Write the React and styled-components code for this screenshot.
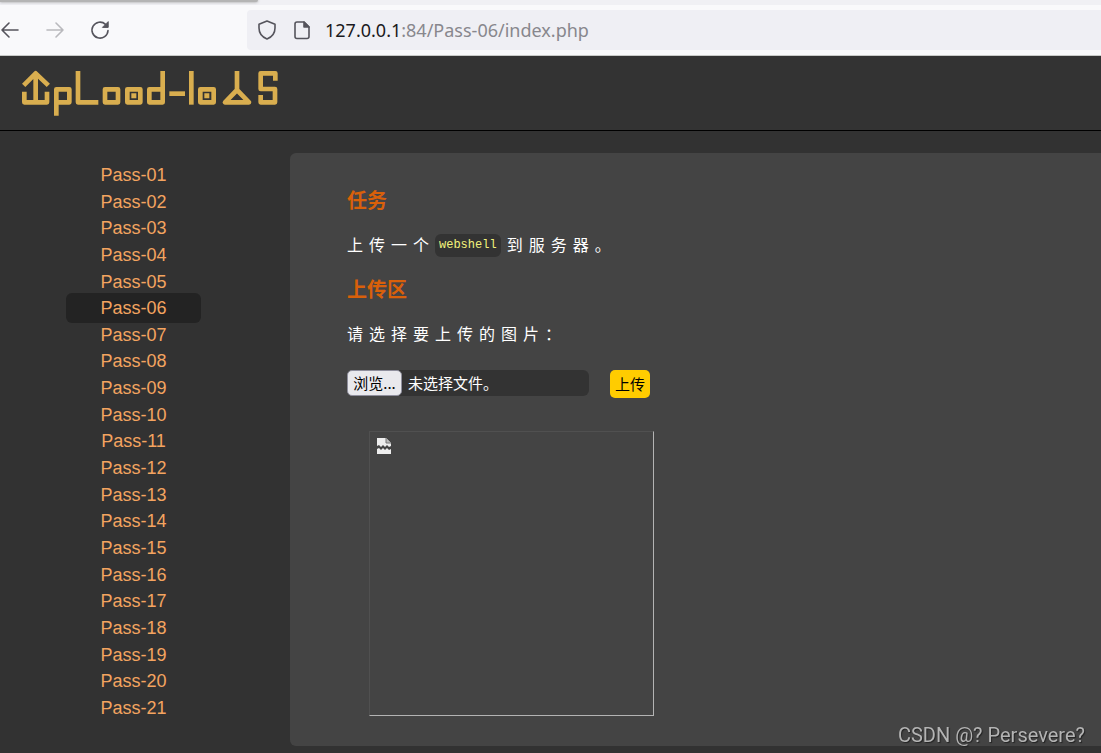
import React, { useState } from "react";
import styled, { createGlobalStyle } from "styled-components";

const Global = createGlobalStyle`
  * { box-sizing: border-box; }
  body {
    margin: 0;
    background: #323232;
    font-family: "Liberation Sans", "Noto Sans CJK SC", sans-serif;
    overflow-x: hidden;
  }
`;

const TabStrip = styled.div`
  height: 5px;
  background: #f0f0f4;
  overflow: hidden;
`;

const TabEdge = styled.div`
  width: 258px;
  height: 2px;
  border-radius: 0 0 6px 0;
  background: #b4b4b4;
  box-shadow: 0 0 3px #8a8a8a;
`;

const Toolbar = styled.nav`
  display: flex;
  align-items: center;
  height: 51px;
  background: #f9f9fb;
  border-bottom: 1px solid #c8cac8;
`;

const NavButtons = styled.div`
  display: flex;
  flex: none;
  gap: 25px;
  width: 247px;
`;

const NavButton = styled.button`
  display: flex;
  width: 20px;
  height: 20px;
  padding: 0;
  border: 0;
  background: none;
  color: ${(p) => (p.disabled ? "#b9b9bd" : "#55545c")};
`;

const AddressBar = styled.div`
  display: flex;
  flex: 1;
  align-items: center;
  gap: 15px;
  height: 40px;
  padding-left: 10px;
  border-radius: 4px 0 0 4px;
  background: #efeff4;
  color: #55545c;
`;

const Address = styled.p`
  margin: 0 0 0 -2px;
  font: 18px/24px "Noto Sans", sans-serif;
  color: #88878d;
`;

const Host = styled.span`
  color: #1a1920;
`;

const Header = styled.header`
  display: flex;
  align-items: flex-start;
  height: 75px;
  padding: 13px 20px;
  background: #333;
  border-bottom: 1px solid #000;
`;

const Main = styled.main`
  display: flex;
  padding: 22px 0 7px;
`;

const Sidebar = styled.ul`
  display: flex;
  flex: none;
  flex-direction: column;
  justify-content: space-between;
  align-items: center;
  width: 267px;
  margin: 0 23px 0 0;
  padding: 9px 0 25px;
  list-style: none;
`;

const PassItem = styled.li`
  height: 26px;
  font-size: 18px;
  line-height: 26px;
`;

const PassLink = styled.a`
  padding: 5px 34px;
  border-radius: 6px;
  color: #f4a460;
  text-decoration: none;
  background: ${(p) => (p.$active ? "#232323" : "transparent")};
`;

const Panel = styled.section`
  flex: 1;
  padding: 32px 57px 30px;
  border-radius: 6px 0 0 6px;
  background: #444;
`;

const Title = styled.h3`
  margin: 0;
  font: bold 20px/30px "Noto Sans CJK SC", sans-serif;
  color: #d9600a;
`;

const Text = styled.p`
  margin: 16px 0 17px;
  font: 16px/26px "Noto Sans CJK SC", sans-serif;
  letter-spacing: 6px;
  color: #fff;
`;

const Code = styled.code`
  display: inline-block;
  vertical-align: bottom;
  margin-right: 6px;
  padding: 0 4px;
  border-radius: 6px;
  background: #333;
  color: #f2f27c;
  font: 12px/23px "Liberation Mono", monospace;
  letter-spacing: 0;
`;

const UploadForm = styled.form`
  display: flex;
  align-items: flex-start;
  gap: 21px;
  margin-top: 24px;
  font: 15px/26px "Noto Sans CJK SC", sans-serif;
`;

const FilePicker = styled.label`
  position: relative;
  display: flex;
  width: 242px;
  height: 26px;
  border-radius: 6px;
  background: #333;
  color: #fff;
`;

const HiddenFile = styled.input`
  position: absolute;
  inset: 0;
  width: 100%;
  opacity: 0;
`;

const Browse = styled.span`
  width: 55px;
  margin-right: 6px;
  border: 1px solid #8f8f9d;
  border-radius: 5px;
  background: #e9e9ed;
  color: #000;
  line-height: 24px;
  text-align: center;
`;

const Submit = styled.button`
  width: 40px;
  height: 28px;
  padding: 0;
  border: 0;
  border-radius: 5px;
  background: #fc0;
  color: #000;
  font: inherit;
`;

const Preview = styled.div`
  width: 285px;
  height: 285px;
  margin: 33px 0 0 22px;
  padding: 6px 7px;
  border: 1px solid;
  border-color: #505050 #b4b4b4 #b4b4b4 #505050;
`;

const Watermark = styled.div`
  position: fixed;
  right: 16px;
  bottom: 6px;
  font: 20px/24px Roboto, sans-serif;
  color: #b4b4b4;
  text-shadow: 1px 1px 1px #222;
`;

const Icon = ({ children, size = 20 }) => (
  <svg width={size} height={size} viewBox="0 0 20 20" fill="none" stroke="currentColor" strokeWidth="1.6" strokeLinecap="round" strokeLinejoin="round" aria-hidden="true">
    {children}
  </svg>
);

const Logo = () => (
  <svg width="260" height="50" viewBox="60 42 780 150" fill="none" stroke="#d9ae4f" strokeWidth="14" strokeLinejoin="round" role="img" aria-label="Upload-labs">
    <path d="M71 91 107 55 145 91M107 55V142M73 110V142H141V110" />
    <path d="M169 182V103H208V142H169" />
    <path d="M234 48V142H295" />
    <path d="M315 103H354V142H315Z" />
    <path d="M382 103H421V142H382Z" />
    <path d="M488 48V142H448V103H488" />
    <path d="M508 116H555" />
    <path d="M574 48V149" />
    <path d="M601 103H641V142H601Z" />
    <path d="M711 48V105L675 142H747L711 105" />
    <path d="M826 77V55H782V102H825V142H782V120" />
    <path d="M394 122H409M613 122H628" strokeWidth="15" />
  </svg>
);

const passes = Array.from({ length: 21 }, (_, i) => `Pass-${String(i + 1).padStart(2, "0")}`);

export default function App() {
  const [fileName, setFileName] = useState("");
  return (
    <>
      <Global />
      <TabStrip><TabEdge /></TabStrip>
      <Toolbar>
        <NavButtons>
          <NavButton aria-label="Back">
            <Icon><path d="M18 10H2M9 3 2 10l7 7" /></Icon>
          </NavButton>
          <NavButton aria-label="Forward" disabled>
            <Icon><path d="M2 10h16M11 3l7 7-7 7" /></Icon>
          </NavButton>
          <NavButton aria-label="Reload">
            <Icon>
              <path d="M18 10.5A8 8 0 1 1 15.5 4.3" />
              <path d="M18.2 2v5.4h-5.4z" fill="currentColor" strokeWidth="1" />
            </Icon>
          </NavButton>
        </NavButtons>
        <AddressBar>
          <Icon><path d="M10 1 18 4.3V8c0 5-3 9-8 11C5 17 2 13 2 8V4.3z" /></Icon>
          <Icon>
            <path d="M5 2h7l5 5v9.5a2 2 0 0 1-2 2H5a2 2 0 0 1-2-2V4a2 2 0 0 1 2-2z" />
            <path d="M12 2v5h5z" fill="currentColor" />
          </Icon>
          <Address><Host>127.0.0.1</Host>:84/Pass-06/index.php</Address>
        </AddressBar>
      </Toolbar>
      <Header><Logo /></Header>
      <Main>
        <Sidebar>
          {passes.map((name) => (
            <PassItem key={name}>
              <PassLink href={`#${name}`} $active={name === "Pass-06"}>{name}</PassLink>
            </PassItem>
          ))}
        </Sidebar>
        <Panel>
          <Title>任务</Title>
          <Text>上传一个<Code>webshell</Code>到服务器。</Text>
          <Title>上传区</Title>
          <Text>请选择要上传的图片：</Text>
          <UploadForm onSubmit={(e) => e.preventDefault()}>
            <FilePicker>
              <Browse>浏览...</Browse>
              {fileName || "未选择文件。"}
              <HiddenFile type="file" onChange={(e) => setFileName(e.target.files[0]?.name ?? "")} />
            </FilePicker>
            <Submit>上传</Submit>
          </UploadForm>
          <Preview>
            <svg width="14" height="16" viewBox="0 0 14 16" aria-hidden="true">
              <path d="M0 0h9l5 5v3l-2 1-2-2-2 2-2-2-2 2-2-2-2 1zM0 11l2-1 2 2 2-2 2 2 2-2 2 2 2-1v5H0z" fill="#eee" />
              <path d="M9 0v5h5" fill="#bbb" stroke="#777" />
            </svg>
          </Preview>
        </Panel>
      </Main>
      <Watermark>CSDN @? Persevere?</Watermark>
    </>
  );
}
